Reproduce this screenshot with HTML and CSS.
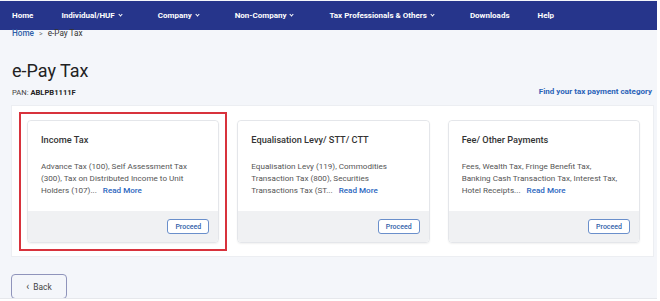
FILE: index.html
```html
<!DOCTYPE html>
<html lang="en">
<head>
  <meta charset="UTF-8">
  <title>e-Pay Tax</title>
  <meta name="viewport" content="width=device-width, initial-scale=1.0">
  <link rel="stylesheet" href="styles.css">
</head>
<body>
  <div class="page">
    <nav class="topnav">
      <a class="nav-item">Home</a>
      <a class="nav-item drop">Individual/HUF</a>
      <a class="nav-item drop">Company</a>
      <a class="nav-item drop">Non-Company</a>
      <a class="nav-item drop">Tax Professionals &amp; Others</a>
      <a class="nav-item">Downloads</a>
      <a class="nav-item">Help</a>
    </nav>

    <div class="crumbs">
      <a class="crumb-link">Home</a>
      <span class="crumb-sep">&gt;</span>
      <span>e-Pay Tax</span>
    </div>

    <h1 class="title">e-Pay Tax</h1>

    <div class="subline">
      <span class="pan">PAN: <b>ABLPB1111F</b></span>
      <a class="find-link">Find your tax payment category</a>
    </div>

    <div class="panel">
      <div class="card selected">
        <div class="card-body">
          <h2 class="card-title">Income Tax</h2>
          <p class="card-text">Advance Tax (100), Self Assessment Tax (300), Tax on Distributed Income to Unit Holders (107)... <a class="read-more">Read More</a></p>
        </div>
        <div class="card-foot"><button class="proceed">Proceed</button></div>
      </div>
      <div class="card">
        <div class="card-body">
          <h2 class="card-title">Equalisation Levy/ STT/ CTT</h2>
          <p class="card-text">Equalisation Levy (119), Commodities Transaction Tax (800), Securities Transactions Tax (ST... <a class="read-more">Read More</a></p>
        </div>
        <div class="card-foot"><button class="proceed">Proceed</button></div>
      </div>
      <div class="card">
        <div class="card-body">
          <h2 class="card-title">Fee/ Other Payments</h2>
          <p class="card-text">Fees, Wealth Tax, Fringe Benefit Tax, Banking Cash Transaction Tax, Interest Tax, Hotel Receipts... <a class="read-more">Read More</a></p>
        </div>
        <div class="card-foot"><button class="proceed">Proceed</button></div>
      </div>
    </div>

    <button class="back"><span class="back-arrow">&lsaquo;</span> Back</button>
  </div>
</body>
</html>
```

FILE: styles.css
```css
body {
  margin: 0;
  background: #ffffff;
  font-family: Roboto, 'Liberation Sans', sans-serif;
  color: #333;
  overflow: hidden;
}
.page {
  width: 657px;
  height: 297px;
  padding-top: 1px;
  background: #f4f6fa;
  border-bottom: 1px solid #e6e8ec;
  overflow: hidden;
}
.topnav {
  display: flex;
  align-items: center;
  height: 29px;
  padding-left: 12px;
  gap: 28px;
  background: #26358b;
}
.nav-item {
  color: #ffffff;
  font-size: 8px;
  font-weight: 700;
}
.nav-item.drop {
  padding-right: 8px;
}
.nav-item.drop::after {
  content: '';
  display: inline-block;
  width: 2px;
  height: 2px;
  margin-left: 4px;
  margin-bottom: 2px;
  border-right: 1px solid #ffffff;
  border-bottom: 1px solid #ffffff;
  transform: rotate(45deg);
}
.crumbs {
  padding-left: 12px;
  font-size: 8.2px;
  line-height: 9px;
  margin-top: -1px;
  color: #333;
}
.crumb-link {
  color: #2f5ea8;
  font-weight: 500;
}
.crumb-sep {
  margin: 0 3px;
  color: #777;
  font-size: 7px;
}
.title {
  margin: 22px 0 0 12px;
  font-size: 18px;
  font-weight: 400;
  line-height: 20px;
  color: #222;
}
.subline {
  display: flex;
  justify-content: space-between;
  align-items: center;
  margin: 5px 5px 0 12px;
  font-size: 7.6px;
  line-height: 10px;
}
.pan {
  color: #444;
  margin-top: 2px;
}
.pan b {
  color: #222;
}
.find-link {
  color: #2b63b8;
  font-weight: 700;
  font-size: 8px;
}
.panel {
  display: flex;
  gap: 18px;
  margin: 7px 3px 0 11px;
  padding: 14px 13px 13px 15px;
  background: #ffffff;
  border: 1px solid #eceef2;
}
.card {
  flex: 1;
  display: flex;
  flex-direction: column;
  height: 121px;
  border: 1px solid #e4e6ea;
  border-radius: 4px;
  box-shadow: 0 1px 2px rgba(0,0,0,0.06);
}
.card.selected {
  position: relative;
}
.card.selected::before {
  content: '';
  position: absolute;
  top: -9px;
  left: -9px;
  right: -9px;
  bottom: -9px;
  border: 2px solid #d8323c;
  pointer-events: none;
}
.card-body {
  flex: 1;
  padding: 13px 20px 0 13px;
  background: #ffffff;
  border-radius: 4px 4px 0 0;
}
.card-title {
  margin: 0;
  font-size: 9.2px;
  font-weight: 500;
  line-height: 12px;
  color: #333;
}
.card-text {
  margin: 15px 0 0 0;
  font-size: 8.1px;
  line-height: 11.8px;
  color: #555;
}
.read-more {
  color: #2b66c0;
  font-weight: 500;
  margin-left: 4px;
}
.card-foot {
  display: flex;
  justify-content: flex-end;
  align-items: center;
  height: 31px;
  padding-right: 9px;
  background: #f0f1f3;
  border-radius: 0 0 4px 4px;
}
.proceed {
  height: 15px;
  padding: 0 7px;
  font-family: inherit;
  font-size: 7px;
  font-weight: 500;
  color: #2f5ea8;
  background: #ffffff;
  border: 1px solid #6a8fcb;
  border-radius: 3px;
}
.back {
  display: block;
  margin: 17px 0 0 11px;
  width: 56px;
  height: 25px;
  padding: 0;
  font-family: inherit;
  font-size: 8.4px;
  color: #444;
  background: #f4f6fa;
  border: 1px solid #8f94bb;
  border-radius: 4px;
}
.back-arrow {
  font-size: 10px;
  margin-right: 2px;
}
```
